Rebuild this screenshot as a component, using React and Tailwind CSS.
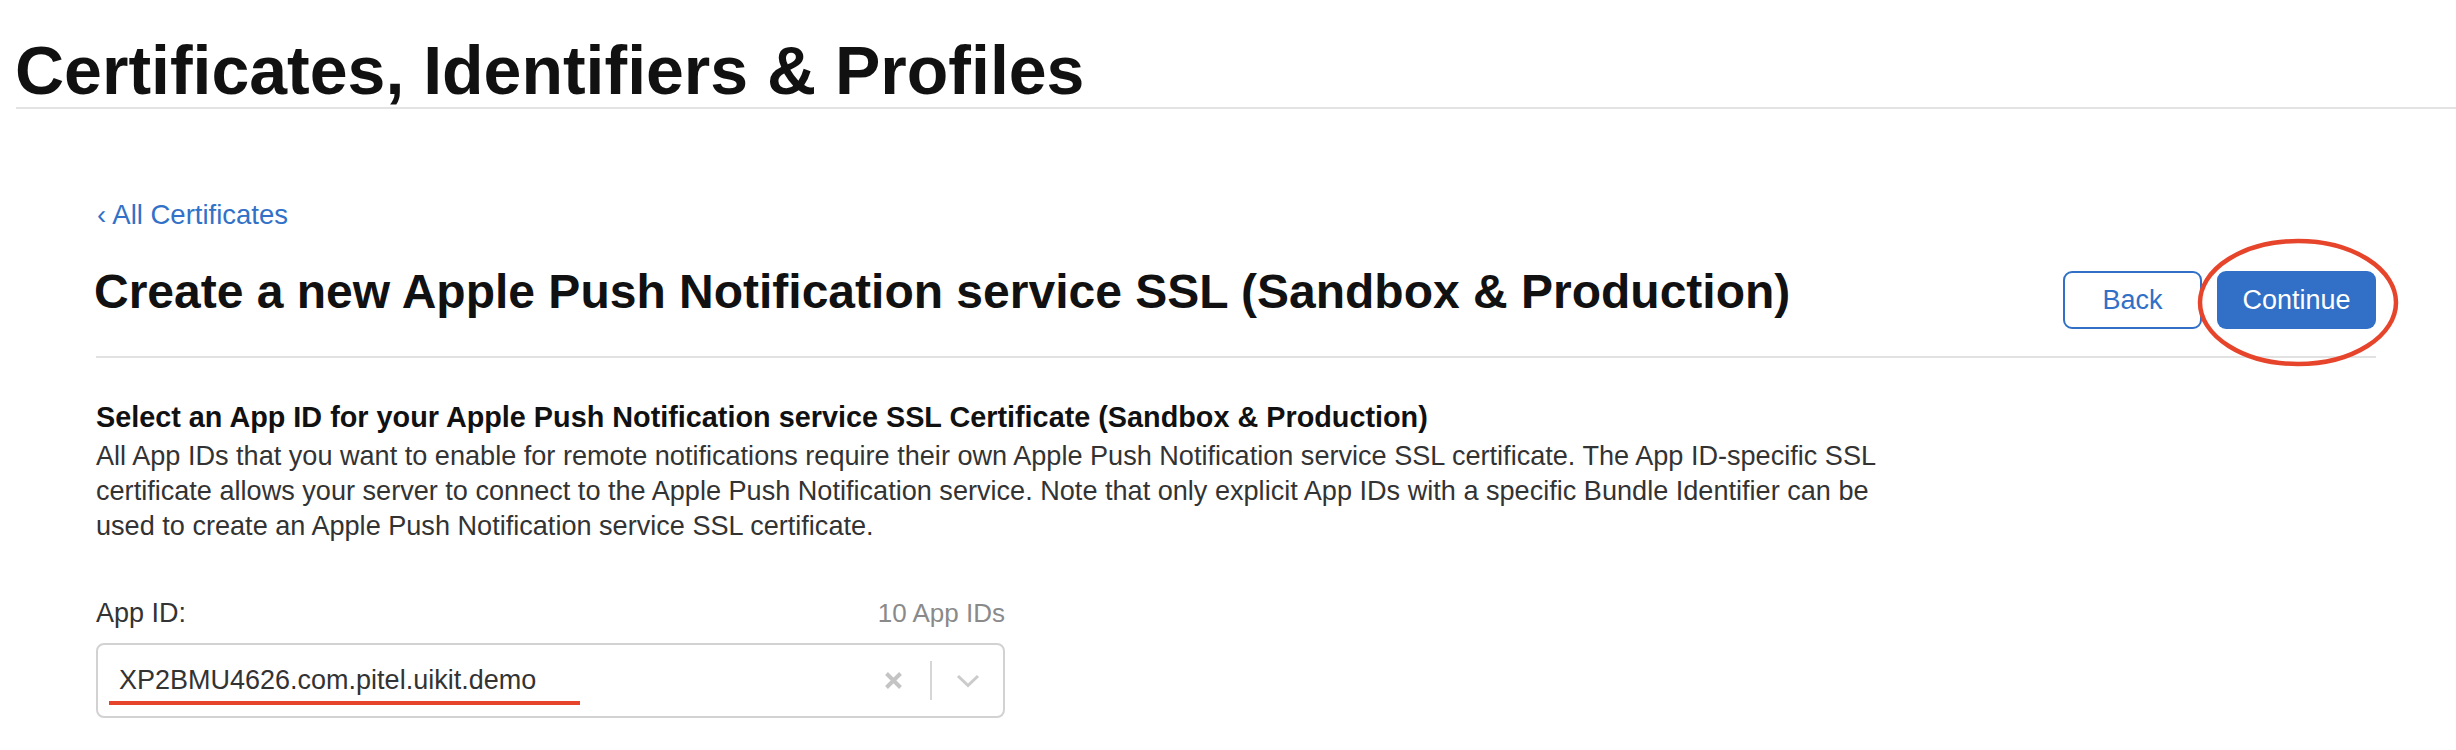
import React from 'react';

const BLUE = '#3170c6';

// small gray icons inside the App ID select
function ClearIcon() {
  return (
    <svg width="19" height="19" viewBox="0 0 19 19" className="shrink-0">
      <path d="M2.5 2.5 L16.5 16.5 M16.5 2.5 L2.5 16.5" stroke="#c4c4c4" strokeWidth="4" strokeLinecap="butt" />
    </svg>
  );
}

function ChevronIcon() {
  return (
    <svg width="24" height="14" viewBox="0 0 24 14" className="shrink-0">
      <polyline points="2,2 12,11.5 22,2" fill="none" stroke="#cbcbcb" strokeWidth="3" />
    </svg>
  );
}

export default function App() {
  return (
    <div className="min-h-screen bg-white text-[#111] font-['Liberation_Sans',Arial,sans-serif]">
      {/* Page title */}
      <header className="pl-[15px] pt-[34px]">
        <h1 className="text-[68px] leading-[72px] font-bold text-[#111]">
          Certificates, Identifiers &amp; Profiles
        </h1>
        <div className="ml-[1px] mt-[1px] h-[2px] bg-[#e3e3e3]" />
      </header>

      <main className="pl-[96px] pr-[80px]">
        <a href="#" className="mt-[90px] block text-[27.5px] leading-[32px] text-[#3171c7]">
          <span className="inline-block pl-[1px]">‹</span> All Certificates
        </a>

        {/* Heading + actions */}
        <div className="mt-[37px] flex items-start justify-between border-b-2 border-[#e2e2e2] pb-[27px]">
          <h2 className="-ml-[2px] text-[48px] leading-[48px] font-bold text-[#111]">
            Create a new Apple Push Notification service SSL (Sandbox &amp; Production)
          </h2>
          <div className="mt-[3px] flex gap-[15px]">
            <button className="h-[58px] w-[139px] rounded-[9px] border-2 border-[#3170c6] bg-white text-[27px] text-[#3170c6]">
              Back
            </button>
            <div className="relative">
              <button
                className="h-[58px] w-[159px] rounded-[9px] text-[27px] text-white"
                style={{ backgroundColor: BLUE }}
              >
                Continue
              </button>
              {/* red annotation ring */}
              <svg
                width="204"
                height="131"
                viewBox="0 0 204 131"
                className="pointer-events-none absolute left-[-21px] top-[-34px]"
              >
                <ellipse cx="102" cy="65.5" rx="98" ry="61.5" fill="none" stroke="#e6452c" strokeWidth="4.5" />
              </svg>
            </div>
          </div>
        </div>

        {/* Section */}
        <section className="mt-[41px]">
          <h3 className="text-[28.8px] leading-[36px] font-bold text-[#111]">
            Select an App ID for your Apple Push Notification service SSL Certificate (Sandbox &amp; Production)
          </h3>
          <p className="mt-[3px] text-[27.1px] leading-[35px] text-[#333]">
            All App IDs that you want to enable for remote notifications require their own Apple Push Notification service SSL certificate. The App ID-specific SSL
            <br />
            certificate allows your server to connect to the Apple Push Notification service. Note that only explicit App IDs with a specific Bundle Identifier can be
            <br />
            used to create an Apple Push Notification service SSL certificate.
          </p>

          <div className="mt-[53px] w-[909px]">
            <div className="flex items-center justify-between text-[27px] leading-[35px]">
              <label className="text-[#333]">App ID:</label>
              <span className="text-[26px] text-[#8a8a8a]">10 App IDs</span>
            </div>

            <div className="relative mt-[12px] flex h-[75px] items-center rounded-[8px] border-2 border-[#d2d2d2] bg-white">
              <span className="flex-1 pl-[21px] text-[27px] text-[#333]">XP2BMU4626.com.pitel.uikit.demo</span>
              <ClearIcon />
              <div className="ml-[27px] mr-[24px] h-[39px] w-[2px] bg-[#d6d6d6]" />
              <ChevronIcon />
              <div className="w-[23px]" />
              {/* red underline annotation */}
              <div className="absolute left-[11px] top-[56px] h-[4px] w-[471px] bg-[#e6452c]" />
            </div>
          </div>
        </section>
      </main>
    </div>
  );
}
